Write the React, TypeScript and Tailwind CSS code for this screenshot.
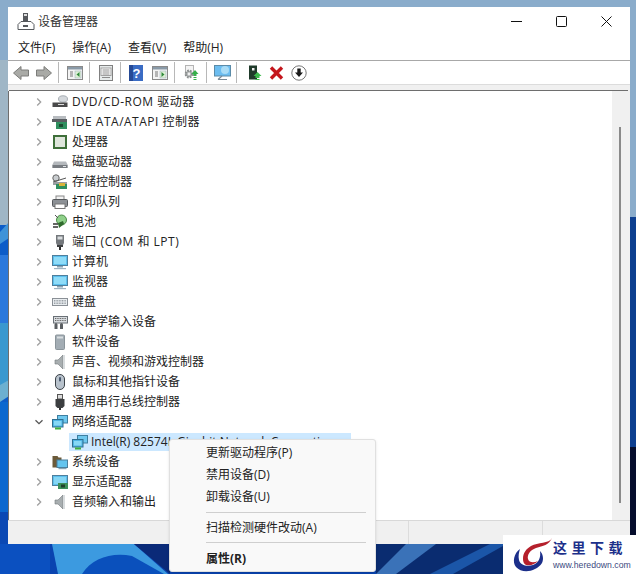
import React from "react";

const cjk = "font-['Open_Sans','Noto_Sans_CJK_SC',sans-serif]";

type IC = React.ReactNode;
const S = ({ children, w = 16, h = 16 }: { children: IC; w?: number; h?: number }) => (
  <svg width={w} height={h} viewBox={`0 0 ${w} ${h}`} className="block shrink-0">{children}</svg>
);

const Monitor = () => (
  <>
    <rect x="0.5" y="1.5" width="15" height="10" fill="#5cc0ee" stroke="#4f7f9c" />
    <rect x="2" y="3" width="12" height="7" fill="#8fdcf8" />
    <rect x="5" y="12" width="6" height="1.5" fill="#8aa4b4" />
    <rect x="2" y="14" width="12" height="1.2" fill="#9fb4c2" />
  </>
);
const Net = () => (
  <>
    <rect x="5.5" y="1.5" width="10" height="7.5" fill="#6fc8ee" stroke="#3f7fa0" />
    <rect x="0.5" y="5.5" width="10.5" height="7.5" fill="#4eb4e4" stroke="#2f6f90" />
    <rect x="2" y="7" width="7.5" height="4.5" fill="#86d8f6" />
    <rect x="3" y="13.5" width="6" height="2" fill="#3fb03f" />
  </>
);
const icons: Record<string, IC> = {
  dvd: (
    <>
      <ellipse cx="11" cy="5" rx="4.5" ry="3.2" fill="#d4d8dc" stroke="#a8aeb4" />
      <rect x="0.5" y="8.5" width="15" height="4.5" fill="#4a4a4a" />
      <rect x="6" y="10" width="6" height="1" fill="#ddd" />
    </>
  ),
  ide: (
    <>
      <rect x="1" y="2" width="13" height="3.5" fill="#b8bcc0" />
      <rect x="0" y="5" width="15" height="3" fill="#5a5e62" />
      <rect x="4" y="8" width="11" height="7" fill="#2f8f5f" />
      <rect x="7" y="10" width="4" height="3" fill="#1c4a30" />
    </>
  ),
  cpu: (
    <>
      <rect x="1" y="1" width="14" height="14" fill="#3f6f3a" />
      <rect x="3" y="3" width="10" height="10" fill="#dfe6dc" />
    </>
  ),
  disk: (
    <>
      <path d="M2 7.5h12l1.5 3v3.5H.5v-3.5z" fill="#b4b8bc" />
      <rect x="0.5" y="11" width="15" height="3" fill="#777b80" />
      <rect x="11" y="12" width="3" height="1" fill="#dfe3e6" />
    </>
  ),
  storage: (
    <>
      <circle cx="4" cy="4" r="3.2" fill="#c9cdd0" stroke="#666" />
      <path d="M1 8l13-4" stroke="#555" />
      <rect x="1" y="8" width="14" height="3" fill="#9a9ea2" />
      <rect x="4" y="10" width="11" height="5" fill="#2f8f5f" />
      <rect x="7" y="9" width="6" height="3" fill="#d8b43a" />
    </>
  ),
  print: (
    <>
      <rect x="4" y="2" width="8" height="4" fill="#f2f2f2" stroke="#888" />
      <rect x="0.5" y="5.5" width="15" height="7" rx="1" fill="#8d9196" stroke="#55585c" />
      <rect x="3" y="10" width="10" height="4.5" fill="#fff" stroke="#777" />
    </>
  ),
  bat: (
    <>
      <circle cx="9.5" cy="6" r="5" fill="#8fd08a" stroke="#4c8a48" />
      <path d="M6 9l5-2 1 3-5 4z" fill="#2f6a2c" />
      <path d="M1 10h5M1 13h5" stroke="#333" strokeWidth="1.6" />
      <path d="M3 1l3 3" stroke="#555" />
    </>
  ),
  port: (
    <>
      <path d="M4 1h8v8l-1 2H5L4 9z" fill="#74787c" />
      <rect x="5.5" y="2.5" width="5" height="3" fill="#d8dcde" />
      <rect x="5" y="11" width="6" height="2" fill="#3c3e40" />
      <rect x="7" y="13" width="2" height="3" fill="#2c2c2c" />
    </>
  ),
  pc: <Monitor />,
  mon: <Monitor />,
  kb: (
    <>
      <rect x="0.5" y="4.5" width="15" height="7" fill="#e9edf0" stroke="#8a9096" />
      <path d="M2 6.5h12M2 8h12M2 9.5h12" stroke="#9aa0a6" strokeDasharray="1 .6" />
    </>
  ),
  hid: (
    <>
      <rect x="1.5" y="2.5" width="14" height="6.5" fill="#d8dce0" stroke="#6a7076" />
      <path d="M3 4.5h11M3 6.5h11" stroke="#666" strokeDasharray="1 .7" />
      <path d="M2.5 15v-4.5a1.5 1.5 0 0 1 3 0V15zM8 15v-4.5a1.5 1.5 0 0 1 3 0V15z" fill="#5a5e62" />
    </>
  ),
  soft: (
    <>
      <rect x="3.5" y="1" width="9" height="14.5" rx="1" fill="#a3adb4" stroke="#8a949a" />
      <rect x="5" y="2.5" width="6" height="2" fill="#d8dde0" />
    </>
  ),
  snd: (
    <>
      <path d="M3 6h3l5-5v14l-5-5H3z" fill="#a8aeb0" stroke="#74797c" strokeWidth=".6" />
      <rect x="11" y="1" width="2" height="14" fill="#d8dcde" />
    </>
  ),
  mouse: (
    <>
      <rect x="3.5" y="0.5" width="9" height="15" rx="4.5" fill="#b8c2cc" stroke="#3c4248" />
      <rect x="7" y="3" width="2" height="4.5" rx="1" fill="#4a5a70" />
    </>
  ),
  usb: (
    <>
      <rect x="5.5" y="0.5" width="5" height="4.5" fill="#dcdcdc" stroke="#555" />
      <path d="M3.5 5h9v7l-2 2h-5l-2-2z" fill="#3c3e40" />
      <rect x="7" y="14" width="2" height="2" fill="#333" />
    </>
  ),
  net: <Net />,
  sys: (
    <>
      <path d="M0.5 2h5l1 1.5h3v10h-9z" fill="#6b5a3a" />
      <rect x="5" y="6" width="10.5" height="7.5" fill="#63c4ee" stroke="#4a7f9c" />
      <rect x="6.5" y="14" width="8" height="1.2" fill="#8aa4b4" />
    </>
  ),
  disp: (
    <>
      <rect x="0.5" y="1.5" width="15" height="10" fill="#5cc0ee" stroke="#4f7f9c" />
      <rect x="2" y="3" width="12" height="7" fill="#86d6f4" />
      <rect x="6" y="9" width="10" height="6" fill="#3c8f5a" />
      <rect x="9" y="10.5" width="4" height="3" fill="#20402c" />
    </>
  ),
};

const rows: [string, string, boolean?][] = [
  ["dvd", "DVD/CD-ROM 驱动器"],
  ["ide", "IDE ATA/ATAPI 控制器"],
  ["cpu", "处理器"],
  ["disk", "磁盘驱动器"],
  ["storage", "存储控制器"],
  ["print", "打印队列"],
  ["bat", "电池"],
  ["port", "端口 (COM 和 LPT)"],
  ["pc", "计算机"],
  ["mon", "监视器"],
  ["kb", "键盘"],
  ["hid", "人体学输入设备"],
  ["soft", "软件设备"],
  ["snd", "声音、视频和游戏控制器"],
  ["mouse", "鼠标和其他指针设备"],
  ["usb", "通用串行总线控制器"],
  ["net", "网络适配器", true],
];
const rowsAfter: [string, string][] = [
  ["sys", "系统设备"],
  ["disp", "显示适配器"],
  ["snd", "音频输入和输出"],
];

const Chevron = ({ open }: { open?: boolean }) => (
  <svg width="10" height="10" viewBox="0 0 10 10" className="block shrink-0">
    <path d={open ? "M1.5 3.2 5 6.7l3.5-3.5" : "M3.2 1.5 6.7 5 3.2 8.5"} fill="none" stroke={open ? "#555" : "#a0a0a0"} strokeWidth="1.3" />
  </svg>
);

const Row = ({ icon, label, open }: { icon: string; label: string; open?: boolean }) => (
  <div className="flex h-5 items-center pl-[25px]">
    <Chevron open={open} />
    <div className="ml-[8px] mr-[4px]">
      <S>{icons[icon]}</S>
    </div>
    <span className={`whitespace-nowrap text-[12px] leading-5 text-[#222] ${/[A-Z]{3}/.test(label) ? "tracking-[0.5px]" : ""}`}>{label}</span>
  </div>
);

const Sep = () => <div className="h-[21px] w-px shrink-0 bg-[#b8b8b8]" />;

const Grid = ({ arrow }: { arrow: "l" | "r" }) => (
  <S>
    <rect x="0.5" y="1.5" width="15" height="13" fill="#f4f4f4" stroke="#8a8a8a" />
    <rect x="1" y="2" width="14" height="2.5" fill="#8a9aa8" />
    <path d="M3 7h3M3 9h3M3 11h3" stroke="#777" />
    <rect x="8" y="6" width="6" height="7" fill="#dcefd4" stroke="#9ab" strokeWidth=".5" />
    <path d={arrow === "l" ? "M12.5 7v5l-3-2.5z" : "M9.5 7v5l3-2.5z"} fill="#2f8a3a" />
  </S>
);

const NavArrow = ({ dir }: { dir: "l" | "r" }) => (
  <svg width="16" height="14" viewBox="0 0 16 14" className="block shrink-0">
    <path
      d={dir === "l" ? "M8 .5 .5 7 8 13.5V10h7.5V4H8z" : "M8 .5 15.5 7 8 13.5V10H.5V4H8z"}
      fill="#a9aaa6"
      stroke="#7c7d7a"
    />
  </svg>
);

const Toolbar = () => (
  <div className="flex h-[23px] items-center bg-white pl-[5px]">
    <NavArrow dir="l" />
    <div className="ml-[7px]"><NavArrow dir="r" /></div>
    <div className="ml-[6px]"><Sep /></div>
    <div className="ml-[8px]"><Grid arrow="l" /></div>
    <div className="ml-[6px]"><Sep /></div>
    <div className="ml-[8px]">
      <S>
        <rect x="1.5" y="0.5" width="13" height="15" fill="#e6eaea" stroke="#808080" />
        <rect x="3" y="3" width="10" height="7.5" fill="#fff" stroke="#a0a0a0" />
        <path d="M4.5 5h7M4.5 7h7M4.5 9h7M4 12.5h8" stroke="#8c8c8c" />
      </S>
    </div>
    <div className="ml-[6px]"><Sep /></div>
    <div className="ml-[8px]">
      <svg width="14" height="16" viewBox="0 0 14 16" className="block">
        <rect width="14" height="16" fill="#3a6cc4" />
        <rect x="0" y="0" width="4" height="16" fill="#264a96" />
        <text x="7.5" y="13" fontSize="13" fontWeight="700" fill="#fff" textAnchor="middle" fontFamily="Liberation Sans">?</text>
      </svg>
    </div>
    <div className="ml-[9px]"><Grid arrow="r" /></div>
    <div className="ml-[6px]"><Sep /></div>
    <div className="ml-[8px]">
      <S>
        <rect x="2.5" y="0.5" width="8" height="10" fill="#f4f4f4" stroke="#b4b4b4" />
        <circle cx="6" cy="9" r="3.2" fill="#b0b4b4" stroke="#8c9090" strokeWidth="2.4" strokeDasharray="1.6 1" />
        <circle cx="6" cy="9" r="1.4" fill="#f0f0f0" />
        <path d="M12 5l3.5 4H13.5v2h-3V9H8.5z" fill="#35b04a" />
        <path d="M10.5 12.5h3M10.5 14.5h3" stroke="#35b04a" />
      </S>
    </div>
    <div className="ml-[7px]"><Sep /></div>
    <div className="ml-[7px]">
      <svg width="17" height="15" viewBox="0 0 17 15" className="block">
        <rect x="0.5" y="0.5" width="16" height="10.5" fill="#6cbdf0" stroke="#5b8ba8" />
        <circle cx="11" cy="5" r="4" fill="#a9dcf6" />
        <path d="M8 11 4 14.5M4 14.5h9" stroke="#7a8a96" strokeWidth="1.2" />
      </svg>
    </div>
    <div className="ml-[5px]"><Sep /></div>
    <div className="ml-[11px]">
      <S w={14}>
        <rect x="1" y="0.5" width="8" height="14" fill="#1f3a2a" />
        <rect x="4" y="3" width="2.5" height="2.5" fill="#eee" />
        <path d="M9.5 7l4 4H11.5v2h-4v-2H5.5z" fill="#3cb94c" />
        <path d="M7.5 14.5h4" stroke="#3cb94c" />
      </S>
    </div>
    <div className="ml-[7px]">
      <S w={15}>
        <path d="M2 2.5 13 13.5M13 2.5 2 13.5" stroke="#c4161c" strokeWidth="3.4" />
      </S>
    </div>
    <div className="ml-[7px]">
      <S>
        <circle cx="8" cy="8" r="7.2" fill="#fff" stroke="#777" />
        <path d="M6.3 3.5h3.4v4h2.3L8 12 4 7.5h2.3z" fill="#1a1a1a" />
      </S>
    </div>
  </div>
);

const Wallpaper = () => (
  <svg width="636" height="574" viewBox="0 0 636 574" className="absolute left-0 top-0 block">
    <rect width="636" height="574" fill="#8aaccb" />
    <rect x="0" y="60" width="9" height="168" fill="#9fb6c6" />
    <rect x="0" y="225" width="9" height="349" fill="#0c5cc8" />
    <path d="M0 232 9 222v16l-9 6z" fill="#3f93d8" />
    <rect x="0" y="255" width="9" height="68" fill="#2a78dc" />
    <rect x="0" y="323" width="9" height="62" fill="#3a98cf" />
    <path d="M0 385 9 380v16L0 402z" fill="#6cb0d0" />
    <rect x="0" y="402" width="9" height="110" fill="#0b68cf" />
    <rect x="0" y="512" width="9" height="62" fill="#0a48b4" />
    <rect x="628" y="217" width="8" height="230" fill="#0d3f90" />
    <rect x="628" y="447" width="8" height="100" fill="#050d2c" />
    <rect x="0" y="544" width="636" height="30" fill="#0a44b0" />
    <rect x="0" y="544" width="50" height="30" fill="#0b50c0" />
    <path d="M52 544h82l34 30H58z" fill="#3c9ae0" />
    <path d="M82 574c10-16 30-22 50-18l32 18z" fill="#0a50bc" />
    <path d="M134 544h36v30z" fill="#0a2a78" />
    <rect x="376" y="544" width="127" height="30" fill="#0a2c70" />
    <path d="M376 574l30-30h30l-40 30z" fill="#3a72b8" />
    <path d="M430 574l60-30h13v2l-50 28z" fill="#1b56a8" />
  </svg>
);

const MenuItem = ({ label, bold }: { label: string; bold?: boolean }) => (
  <div className={`flex h-[22px] items-center pl-[36px] text-[12px] text-[#222] ${bold ? "font-bold" : ""}`}>{label}</div>
);

const Watermark = () => (
  <div className="absolute left-[503px] top-[535px] flex h-[39px] w-[133px] items-center bg-white pl-[7px]">
    <svg width="42" height="38" viewBox="0 0 42 38" className="block shrink-0">
      <path d="M10 13C4 17 2 26 6 31c6 7 20 5 26-4 2-4 1-9-2-12 1 6-1 12-7 14-6 2-13 0-14-5-1-4 0-8 1-11z" fill="#1c2f8a" />
      <path d="M42 2c-3 6-14 4-21 8-5 3-8 7-8 13 0 3 1 5 3 6 5 1 9-1 12-4-4 2-9 2-10-2-1-4 2-9 8-11 7-2 13-3 16-10z" fill="#b5202c" />
    </svg>
    <div className="ml-[1px] flex flex-col">
      <span className="whitespace-nowrap text-[14px] font-bold leading-[16px] tracking-[4.5px] text-[#1c2f8a] font-['Noto_Sans_CJK_SC',sans-serif]">这里下载</span>
      <span className="mt-[5px] whitespace-nowrap text-[8.7px] leading-[10px] text-[#3c4a80] font-['Liberation_Sans',sans-serif]">www.heredown.com</span>
    </div>
  </div>
);

export default function App() {
  return (
    <div className={`relative h-[574px] w-[636px] overflow-hidden ${cjk}`}>
      <Wallpaper />
      <div className="absolute left-[8px] top-[7px] flex h-[537px] w-[622px] flex-col bg-[#f0f0f0]">
        <div className="flex h-[29px] items-center bg-white pl-[9px]">
          <svg width="18" height="20" viewBox="0 0 18 20" className="block shrink-0">
            <rect x="6" y="1" width="5" height="8" fill="#55585c" />
            <rect x="7" y="2" width="3" height="2" fill="#ddd" />
            <path d="M1 12.5 4 9.5h10l3 3v5H1z" fill="#fff" stroke="#55585c" />
            <rect x="6" y="13" width="5" height="2" fill="#55585c" />
          </svg>
          <span className="ml-[3px] text-[12px] text-[#333]">设备管理器</span>
          <div className="ml-auto flex items-center pr-[18px]">
            <svg width="11" height="11" viewBox="0 0 11 11" className="block"><path d="M0 5.5h11" stroke="#111" /></svg>
            <svg width="11" height="11" viewBox="0 0 11 11" className="ml-[34px] block"><rect x=".5" y=".5" width="10" height="10" rx="1" fill="none" stroke="#111" /></svg>
            <svg width="11" height="11" viewBox="0 0 11 11" className="ml-[34px] block"><path d="M.5.5l10 10M10.5.5l-10 10" stroke="#111" /></svg>
          </div>
        </div>
        <div className="flex h-[24px] items-center gap-[17px] bg-white pl-[10px] text-[12px] text-[#222]">
          <span>文件(F)</span>
          <span>操作(A)</span>
          <span>查看(V)</span>
          <span>帮助(H)</span>
        </div>
        <div className="h-px bg-[#a8a8a8]" />
        <Toolbar />
        <div className="h-[6px] border-t border-[#dcdcdc] bg-[#f0f0f0]" />
        <div className="mr-[2px] ml-px h-px bg-[#6e6e6e]" />
        <div className="flex h-[429px] min-h-0 bg-white">
          <div className="w-px bg-[#6e6e6e]" />
          <div className="min-w-0 flex-1 pt-px">
            {rows.map(([i, l, o]) => (
              <Row key={l} icon={i} label={l} open={o} />
            ))}
            <div className="flex h-5 items-center pl-[60px]">
              <div className="flex h-[18px] w-[282px] items-center bg-[#cce8ff] pl-[3px]">
                <S><Net /></S>
                <span className="ml-[3px] whitespace-nowrap text-[12px] text-[#222]">Intel(R) 82574L Gigabit Network Connection</span>
              </div>
            </div>
            {rowsAfter.map(([i, l]) => (
              <Row key={l} icon={i} label={l} />
            ))}
          </div>
          <div className="flex w-[16px] shrink-0 justify-center bg-[#f0f0f0] pt-[36px] pb-[17px]">
            <div className="w-[2px] bg-[#8a8a8a]" />
          </div>
          <div className="w-[2px] bg-[#f0f0f0]" />
        </div>
        <div className="flex h-[24px] border-t border-[#d8d8d8] bg-[#f0f0f0]">
          <div className="w-[401px] border-r border-[#dcdcdc]" />
          <div className="w-[134px] border-r border-[#dcdcdc]" />
        </div>
      </div>
      <div className="absolute left-[169px] top-[439px] h-[133px] w-[207px] rounded-[3px] border border-[#e0e0e0] bg-[#f9f9f9] py-[2px] shadow-sm">
        <MenuItem label="更新驱动程序(P)" />
        <MenuItem label="禁用设备(D)" />
        <MenuItem label="卸载设备(U)" />
        <div className="my-[4px] ml-[36px] mr-[9px] h-px bg-[#cfcfcf]" />
        <MenuItem label="扫描检测硬件改动(A)" />
        <div className="ml-[36px] mr-[9px] mt-[3px] mb-[5px] h-px bg-[#cfcfcf]" />
        <MenuItem label="属性(R)" bold />
      </div>
      <Watermark />
    </div>
  );
}
